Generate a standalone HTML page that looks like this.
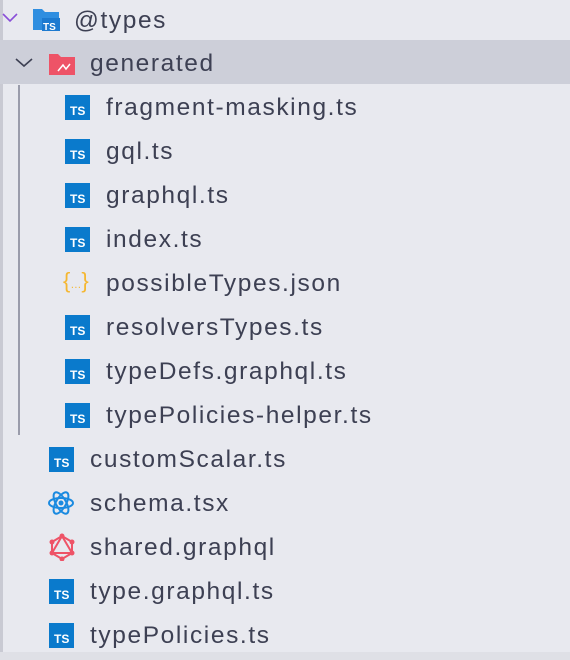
<!DOCTYPE html>
<html><head><style>
body{margin:0;width:570px;height:660px;background:#e8e9ef;font-family:"Liberation Sans",sans-serif;overflow:hidden;position:relative}
.row{position:absolute;left:0;width:570px;height:44px;}
.t{position:absolute;top:8px;font-size:24.5px;letter-spacing:1.6px;color:#3d4053;line-height:30px;white-space:nowrap}
.ic{position:absolute;top:10px;width:25px;height:25px}
.ts{background:#0a7acc;color:#fff;font-size:12px;font-weight:bold;box-sizing:border-box;padding:10px 0 0 5px;line-height:13px}
</style></head><body>
<div style="position:absolute;left:0;top:0;width:3px;height:660px;background:#c9cad3"></div>
<div style="position:absolute;left:0;top:652px;width:570px;height:8px;background:#dfe0e6"></div>
<div class="row" style="top:40px;background:#cdcfd9"></div>
<div style="position:absolute;left:18px;top:85px;width:2px;height:350px;background:#9a9cab"></div>

<div class="row" style="top:-2px">
<svg style="position:absolute;left:2px;top:15px" width="16" height="10"><path d="M1 1 L8 8 L15 1" fill="none" stroke="#8a4fd8" stroke-width="1.6"/></svg>
<svg class="ic" style="left:32px;top:8px;width:30px;height:26px" width="30" height="26"><path d="M1 3h9l3 3h14v18H1z" fill="#2f8ee0"/><rect x="10" y="12" width="18" height="13" fill="#1d7ad0"/><text x="11" y="24" font-size="10" font-weight="bold" fill="#fff" font-family="Liberation Sans">TS</text></svg>
<div class="t" style="left:74px">@types</div></div>

<div class="row" style="top:41px">
<svg style="position:absolute;left:15px;top:17px" width="18" height="10"><path d="M1 1 L9 8 L17 1" fill="none" stroke="#3d4053" stroke-width="1.6"/></svg>
<svg class="ic" style="left:48px;top:10px;width:30px;height:26px" width="30" height="26"><path d="M1 3h9l3 3h14v18H1z" fill="#ee5367"/><path d="M10 20l5-6 3 4 4-5" stroke="#fff" stroke-width="1.5" fill="none"/></svg>
<div class="t" style="left:90px">generated</div></div>

<div class="row" style="top:85px"><div class="ic ts" style="left:65px">TS</div><div class="t" style="left:106px">fragment-masking.ts</div></div>
<div class="row" style="top:129px"><div class="ic ts" style="left:65px">TS</div><div class="t" style="left:106px">gql.ts</div></div>
<div class="row" style="top:173px"><div class="ic ts" style="left:65px">TS</div><div class="t" style="left:106px">graphql.ts</div></div>
<div class="row" style="top:217px"><div class="ic ts" style="left:65px">TS</div><div class="t" style="left:106px">index.ts</div></div>
<div class="row" style="top:261px"><div class="ic" style="left:63px;top:7px;color:#f5b731;font-size:22px;width:30px">{<span style="font-size:11px">…</span>}</div><div class="t" style="left:106px">possibleTypes.json</div></div>
<div class="row" style="top:305px"><div class="ic ts" style="left:65px">TS</div><div class="t" style="left:106px">resolversTypes.ts</div></div>
<div class="row" style="top:349px"><div class="ic ts" style="left:65px">TS</div><div class="t" style="left:106px">typeDefs.graphql.ts</div></div>
<div class="row" style="top:393px"><div class="ic ts" style="left:65px">TS</div><div class="t" style="left:106px">typePolicies-helper.ts</div></div>
<div class="row" style="top:437px"><div class="ic ts" style="left:49px">TS</div><div class="t" style="left:90px">customScalar.ts</div></div>
<div class="row" style="top:481px">
<svg class="ic" style="left:47px;top:8px;width:28px;height:28px" width="28" height="28" viewBox="0 0 28 28"><g fill="none" stroke="#1a8ae0" stroke-width="2"><ellipse cx="14" cy="14" rx="12" ry="5"/><ellipse cx="14" cy="14" rx="12" ry="5" transform="rotate(60 14 14)"/><ellipse cx="14" cy="14" rx="12" ry="5" transform="rotate(120 14 14)"/></g><circle cx="14" cy="14" r="2.5" fill="#1a8ae0"/></svg>
<div class="t" style="left:90px">schema.tsx</div></div>
<div class="row" style="top:525px">
<svg class="ic" style="left:48px;top:8px;width:28px;height:28px" width="28" height="28" viewBox="0 0 28 28"><g fill="none" stroke="#ee5367" stroke-width="2"><path d="M14 3L24 9V20L14 26L4 20V9Z"/><path d="M14 3L4 20H24Z"/></g><g fill="#ee5367"><circle cx="14" cy="3" r="2.5"/><circle cx="24" cy="9" r="2.5"/><circle cx="24" cy="20" r="2.5"/><circle cx="14" cy="26" r="2.5"/><circle cx="4" cy="20" r="2.5"/><circle cx="4" cy="9" r="2.5"/></g></svg>
<div class="t" style="left:90px">shared.graphql</div></div>
<div class="row" style="top:569px"><div class="ic ts" style="left:49px">TS</div><div class="t" style="left:90px">type.graphql.ts</div></div>
<div class="row" style="top:613px"><div class="ic ts" style="left:49px">TS</div><div class="t" style="left:90px">typePolicies.ts</div></div>
</body></html>
